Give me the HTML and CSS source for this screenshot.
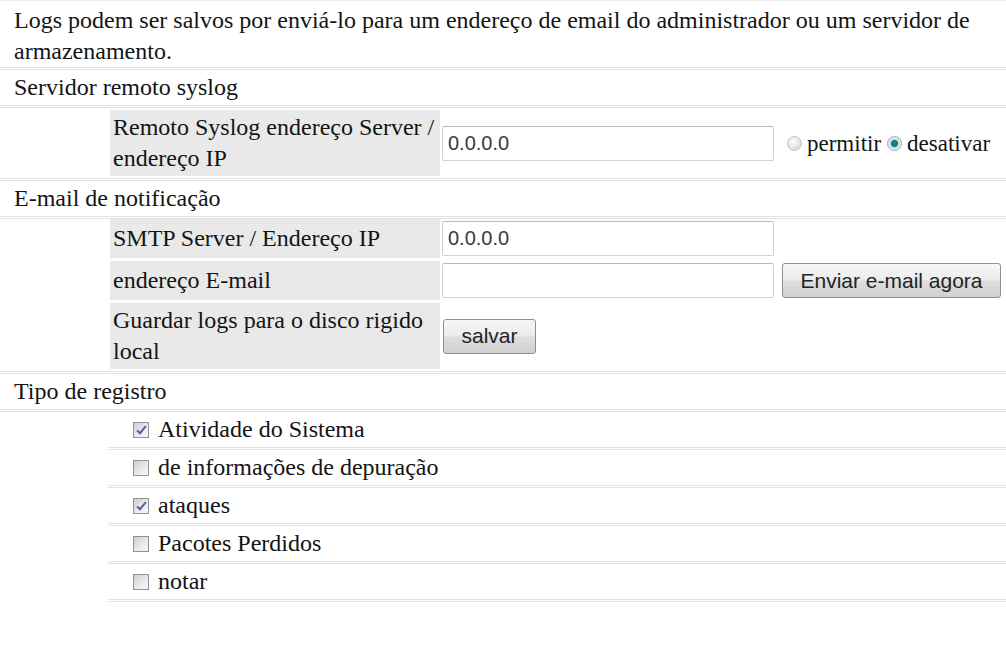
FILE: index.html
```html
<!DOCTYPE html>
<html lang="pt">
<head>
    <meta charset="UTF-8">
    <title>Registro</title>
    <link rel="stylesheet" href="styles.css">
</head>
<body>
    <p class="intro">Logs podem ser salvos por enviá-lo para um endereço de email do administrador ou um servidor de armazenamento.</p>

    <!-- syslog -->
    <p class="sec">Servidor remoto syslog</p>
    <div class="block">
        <div class="row">
            <div class="lbl">Remoto Syslog endereço Server / endereço IP</div>
            <div class="fld"><input type="text" class="txt" value="0.0.0.0"></div>
            <div class="opt">
                <label><input type="radio" name="syslog"> permitir</label>
                <label><input type="radio" name="syslog" checked> desativar</label>
            </div>
        </div>
    </div>

    <!-- email -->
    <p class="sec">E-mail de notificação</p>
    <div class="block b2">
        <div class="row">
            <div class="lbl">SMTP Server / Endereço IP</div>
            <div class="fld"><input type="text" class="txt" value="0.0.0.0"></div>
        </div>
        <div class="row">
            <div class="lbl">endereço E-mail</div>
            <div class="fld"><input type="text" class="txt" value=""></div>
            <button class="btn send">Enviar e-mail agora</button>
        </div>
        <div class="row">
            <div class="lbl">Guardar logs para o disco rigido local</div>
            <div class="fld"><button class="btn save">salvar</button></div>
        </div>
    </div>

    <!-- tipos -->
    <p class="sec">Tipo de registro</p>
    <div class="checks">
        <label class="item"><input type="checkbox" checked>Atividade do Sistema</label>
        <label class="item"><input type="checkbox">de informações de depuração</label>
        <label class="item"><input type="checkbox" checked>ataques</label>
        <label class="item"><input type="checkbox">Pacotes Perdidos</label>
        <label class="item"><input type="checkbox">notar</label>
    </div>
</body>
</html>
```

FILE: styles.css
```css
body { margin: 0; font-family: "Liberation Serif", "DejaVu Serif", serif; font-size: 24px; line-height: 31px; color: #141414; background: #fff; }
p { margin: 0; }

.intro { padding: 4px 0 0 14px; border-top: 1px solid #eee; border-bottom: 3px double #e2e2e2; }
.sec { padding: 2px 0 2px 14px; border-bottom: 3px double #e2e2e2; }

.block { display: flex; flex-direction: column; gap: 3px; padding: 2px 0 2px 110px; border-bottom: 3px double #e2e2e2; }
.block.b2 { padding-top: 0; }
.row { display: flex; align-items: center; }
.lbl { box-sizing: border-box; width: 330px; min-height: 39px; padding: 2px 3px; background: #e9e9e9; align-self: stretch; display: flex; align-items: center; }
.fld { padding-left: 2px; display: flex; align-items: center; }

.txt { box-sizing: border-box; width: 332px; height: 35px; padding: 0 5px; border: 1px solid #d2d2d2; border-top-color: #b9b9b9; border-radius: 2px; font-family: "Liberation Sans", Arial, sans-serif; font-size: 20px; color: #3a3a3a; background: #fff; outline: none; }

.opt { display: flex; align-items: center; margin-left: 13px; font-size: 23px; }
.opt label { display: flex; align-items: center; margin-right: 6px; }
.opt input { appearance: none; -webkit-appearance: none; flex: none; width: 15px; height: 15px; margin: 0 5px 0 0; border-radius: 50%; border: 1px solid #c2c2c2; background: radial-gradient(circle at 40% 35%, #fbfbfb, #d2d2d2); }
.opt input:checked { border-color: #95adb5; background: radial-gradient(circle, #1c868c 0, #1d6f77 3px, #c4dbe0 4px, #eef3f4 7px); }

.btn { height: 35px; padding: 0 17px; border: 1px solid #8f8f8f; border-radius: 3px; background: linear-gradient(#f6f6f6, #ececec 48%, #dedede 52%, #d0d0d0); font-family: "Liberation Sans", Arial, sans-serif; font-size: 21px; color: #232323; cursor: pointer; }
.btn.send { margin-left: 8px; width: 219px; padding: 0; }
.btn.save { margin-left: 1px; width: 93px; padding: 0; }

.checks .item { display: flex; align-items: center; margin-left: 108px; padding: 2px 0 2px 25px; border-bottom: 3px double #e2e2e2; }
.checks input { appearance: none; -webkit-appearance: none; position: relative; flex: none; width: 16px; height: 16px; margin: 0 9px 0 0; border: 1px solid #939393; background: linear-gradient(135deg, #cdcdcd, #ececec 60%, #f6f6f6); }
.checks input:checked::after { content: ""; position: absolute; left: 5px; top: 1px; width: 3px; height: 8px; border-right: 2px solid #4b5fa8; border-bottom: 2px solid #4b5fa8; transform: rotate(40deg); }
```
